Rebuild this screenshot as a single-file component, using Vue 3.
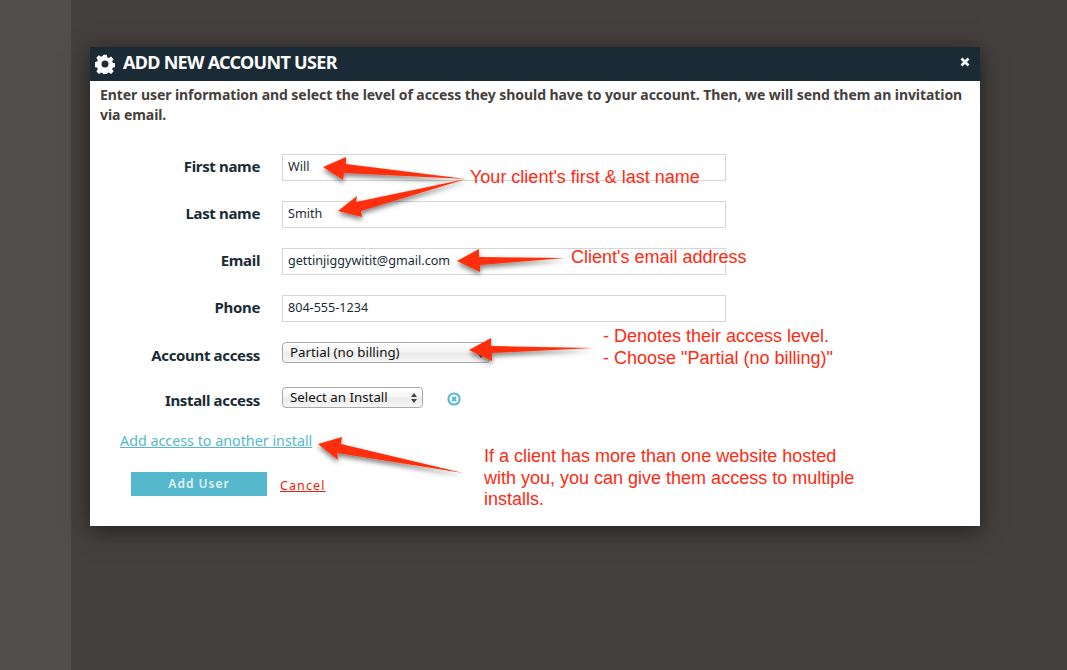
<template>
  <div class="page">
    <aside class="sidebar"></aside>
    <main class="overlay">
      <section class="modal">
        <header class="modal-head">
          <svg class="gear" viewBox="0 0 24 24" width="20" height="20">
            <path fill="#fff" fill-rule="evenodd" d="M9.800 1h4.400l.6 3.100 1.900.8 2.600-1.800 3.100 3.100-1.800 2.600.8 1.900 3 .6v4.400l-3 .6-.8 1.900 1.800 2.600-3.100 3.100-2.600-1.800-1.900.8-.6 3H9.800l-.6-3-1.900-.8-2.600 1.800-3.100-3.100 1.800-2.600-.8-1.900-3-.6V9.700l3-.6.8-1.900-1.800-2.600 3.100-3.100 2.600 1.800 1.900-.8zM12 7.800a4.200 4.200 0 1 0 0 8.400 4.200 4.200 0 0 0 0-8.400z"/>
          </svg>
          <h1>ADD NEW ACCOUNT USER</h1>
          <svg class="close" viewBox="0 0 10 10" width="10" height="10">
            <path d="M1.500 1.500l7 7M8.500 1.500l-7 7" stroke="#fff" stroke-width="2.600"/>
          </svg>
        </header>
        <div class="modal-body">
          <p class="intro">Enter user information and select the level of access they should have to your account. Then, we will send them an invitation via email.</p>
          <form class="form" @submit.prevent>
            <div v-for="f in fields" :key="f.label" class="row">
              <label>{{ f.label }}</label>
              <input type="text" :value="f.value" />
            </div>
            <div class="row row-select">
              <label>Account access</label>
              <div class="select wide">Partial (no billing)<span class="updown"></span></div>
            </div>
            <div class="row row-select">
              <label>Install access</label>
              <div class="select">Select an Install<span class="updown"></span></div>
              <svg class="remove" viewBox="0 0 14 14" width="14" height="14">
                <circle cx="7" cy="7" r="5.600" fill="none" stroke="#55b8cc" stroke-width="2"/>
                <path d="M5 5l4 4M9 5l-4 4" stroke="#55b8cc" stroke-width="2"/>
              </svg>
            </div>
            <a class="add-link">Add access to another install</a>
            <div class="actions">
              <button type="button" class="submit">Add User</button>
              <a class="cancel">Cancel</a>
            </div>
          </form>
        </div>
      </section>
    </main>

    <!-- red markup drawn over the screenshot -->
    <svg class="arrows" width="1067" height="670" viewBox="0 0 1067 670">
      <defs>
        <filter id="sh" x="-20%" y="-50%" width="140%" height="220%">
          <feDropShadow dx="0" dy="3" stdDeviation="2.500" flood-color="#000" flood-opacity="0.5"/>
        </filter>
      </defs>
      <polygon v-for="(a, i) in arrows" :key="i" :points="a" fill="#ff2f08" filter="url(#sh)"/>
    </svg>
    <div class="note n1">Your client's first &amp; last name</div>
    <div class="note n2">Client's email address</div>
    <div class="note n3">- Denotes their access level.<br>- Choose "Partial (no billing)"</div>
    <div class="note n4">If a client has more than one website hosted<br>with you, you can give them access to multiple<br>installs.</div>
  </div>
</template>

<script setup>
const fields = [
  { label: 'First name', value: 'Will' },
  { label: 'Last name', value: 'Smith' },
  { label: 'Email', value: 'gettinjiggywitit@gmail.com' },
  { label: 'Phone', value: '804-555-1234' }
]

const arrows = [
  '323,167 346,157 346,164 466,179 344,173 343,180',
  '338,211 357,196 356,202 466,179 361,211 362,217',
  '457,261 479,249 479,257 565,258 480,265 480,272',
  '469,350 491,338 491,346 593,348 492,353 492,361',
  '318,444 342,437 341,444 463,473 337,453 338,460'
]
</script>

<style>
html, body {
  margin: 0;
  background: #44403d;
}
</style>

<style scoped>
.page {
  position: relative;
  display: flex;
  width: 1067px;
  height: 670px;
  overflow: hidden;
  font-family: "Noto Sans", sans-serif;
}
.sidebar {
  width: 71px;
  background: #504f4d;
}
.overlay {
  flex: 1;
  background: #44403d;
  padding: 47px 0 0 19px;
}
.modal {
  width: 890px;
  height: 479px;
  background: #fff;
  box-shadow: 0 4px 22px rgba(0, 0, 0, 0.55);
}
.modal-head {
  display: flex;
  align-items: center;
  height: 34px;
  padding: 0 10px 0 5px;
  background: #1a2b36;
  color: #fff;
}
.gear {
  margin-right: 8px;
}
h1 {
  flex: 1;
  margin: 0 0 4px;
  font-size: 18px;
  font-weight: 700;
  letter-spacing: -0.7px;
}
.modal-body {
  padding: 4px 0 0 10px;
}
.intro {
  margin: 0;
  font-size: 14px;
  line-height: 20px;
  font-weight: 700;
  letter-spacing: -0.065px;
  color: #45403c;
}
.form {
  margin-top: 29px;
}
.row {
  display: flex;
  align-items: center;
  height: 27px;
  margin-bottom: 20px;
}
.row label {
  width: 160px;
  margin-right: 22px;
  padding-bottom: 3px;
  text-align: right;
  font-size: 15px;
  font-weight: 700;
  letter-spacing: -0.35px;
  color: #1a2b36;
}
.row input {
  box-sizing: border-box;
  width: 444px;
  height: 27px;
  padding: 0 5px 2px;
  border: 1px solid #d6d6d6;
  outline: none;
  font: 12.6px "Noto Sans", sans-serif;
  color: #1a2b36;
}
.row-select {
  height: 21px;
  margin-bottom: 24px;
}
.row-select label {
  padding: 5px 0 0;
}
.select {
  position: relative;
  box-sizing: border-box;
  width: 141px;
  height: 21px;
  padding-left: 7px;
  border: 1px solid #a9a9a9;
  border-radius: 4px;
  background: linear-gradient(#fff, #f5f5f5 45%, #ebebeb 55%, #f6f6f6);
  font-size: 13.300px;
  line-height: 18px;
  color: #111;
}
.wide {
  width: 208px;
}
.updown {
  position: absolute;
  right: 5px;
  top: 5px;
  border-left: 3px solid transparent;
  border-right: 3px solid transparent;
  border-bottom: 4px solid #444;
}
.updown::after {
  content: "";
  position: absolute;
  left: -3px;
  top: 6px;
  border-left: 3px solid transparent;
  border-right: 3px solid transparent;
  border-top: 4px solid #444;
}
.remove {
  margin: 3px 0 0 24px;
}
.add-link {
  display: block;
  margin: -1px 0 0 20px;
  font-size: 14.300px;
  line-height: 20px;
  color: #55b8cc;
  text-decoration: underline;
}
.actions {
  display: flex;
  align-items: center;
  margin: 21px 0 0 31px;
}
.submit {
  width: 136px;
  height: 24px;
  padding: 0 0 2px;
  border: 0;
  background: #55b8cc;
  color: #e4f0f3;
  font: 600 12px "Noto Sans", sans-serif;
  letter-spacing: 1px;
}
.cancel {
  margin: 3px 0 0 13px;
  font-size: 12.500px;
  letter-spacing: 1.1px;
  color: #f01a0a;
  text-decoration: underline;
}
.close {
  flex: none;
  margin-bottom: 4px;
}
.arrows {
  position: absolute;
  left: 0;
  top: 0;
  pointer-events: none;
}
.note {
  position: absolute;
  font-family: "Liberation Sans", Arial, sans-serif;
  font-size: 18px;
  line-height: 22px;
  color: #ff2a12;
  white-space: nowrap;
}
.n1 { left: 470px; top: 166px; }
.n2 { left: 571px; top: 246px; }
.n3 { left: 603px; top: 325px; }
.n4 { left: 484px; top: 446px; line-height: 21.500px; }
</style>
